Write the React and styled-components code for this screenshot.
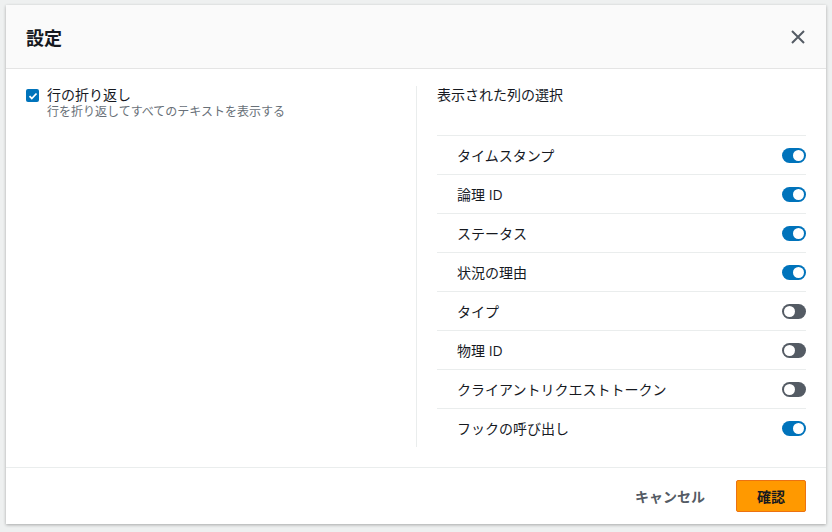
import React, { useState } from 'react';
import styled, { createGlobalStyle } from 'styled-components';

const Global = createGlobalStyle`
  body { margin: 0; background: #eef0f0; font-family: "Open Sans", "Noto Sans CJK JP", sans-serif; }
`;

const Page = styled.div`
  width: 832px;
  height: 532px;
  padding: 5px 6px 0 6px;
  box-sizing: border-box;
`;

const Modal = styled.div`
  width: 820px;
  height: 519px;
  background: #fff;
  box-shadow: 0 1px 3px rgba(0,0,0,0.3);
  display: flex;
  flex-direction: column;
`;

const Header = styled.div`
  height: 63px;
  flex: none;
  background: #fafafa;
  border-bottom: 1px solid #e4e4e4;
  display: flex;
  align-items: center;
  justify-content: space-between;
  padding: 0 20px;
`;

const Title = styled.h2`
  margin: 0;
  font-size: 18px;
  font-weight: 700;
  color: #16191f;
`;

const Close = styled.button`
  border: none;
  background: none;
  padding: 0;
  display: flex;
  cursor: pointer;
`;

const Body = styled.div`
  flex: 1;
  display: grid;
  grid-template-columns: 391px 1fr;
  padding: 17px 20px 20px 20px;
`;

const Left = styled.div`
  border-right: 1px solid #eaeded;
`;

const CheckRow = styled.label`
  display: flex;
  gap: 8px;
  align-items: flex-start;
`;

const Box = styled.span`
  width: 13px;
  height: 13px;
  margin-top: 3px;
  border-radius: 2px;
  background: #0073bb;
  display: flex;
  align-items: center;
  justify-content: center;
`;

const Label = styled.div`
  font-size: 14px;
  color: #16191f;
  line-height: 18px;
`;

const Desc = styled.div`
  font-size: 12px;
  color: #687078;
  line-height: 16px;
`;

const Right = styled.div`
  padding-left: 20px;
`;

const SectionTitle = styled.div`
  font-size: 14px;
  color: #16191f;
  height: 49px;
  line-height: 18px;
`;

const Row = styled.div`
  height: 38px;
  border-top: 1px solid #eaeded;
  display: flex;
  align-items: center;
  justify-content: space-between;
  padding-left: 20px;
  font-size: 14px;
  color: #16191f;
`;

const Toggle = styled.button`
  width: 24px;
  height: 15px;
  border-radius: 8px;
  border: none;
  padding: 0;
  background: ${p => (p.$on ? '#0073bb' : '#545b64')};
  position: relative;
  cursor: pointer;
  &::after {
    content: '';
    position: absolute;
    top: 2px;
    left: ${p => (p.$on ? '11px' : '2px')};
    width: 11px;
    height: 11px;
    border-radius: 50%;
    background: #fff;
  }
`;

const Footer = styled.div`
  height: 56px;
  flex: none;
  border-top: 1px solid #eaeded;
  display: flex;
  align-items: center;
  justify-content: flex-end;
  gap: 10px;
  padding: 0 20px;
`;

const Button = styled.button`
  height: 32px;
  padding: 0 20px;
  font-family: inherit;
  font-size: 14px;
  font-weight: 700;
  border-radius: 2px;
  border: 1px solid ${p => (p.$primary ? '#ec7211' : 'transparent')};
  background: ${p => (p.$primary ? '#ff9900' : 'transparent')};
  color: ${p => (p.$primary ? '#16191f' : '#545b64')};
  cursor: pointer;
`;

const initial = [
  ['タイムスタンプ', true],
  ['論理 ID', true],
  ['ステータス', true],
  ['状況の理由', true],
  ['タイプ', false],
  ['物理 ID', false],
  ['クライアントリクエストトークン', false],
  ['フックの呼び出し', true],
];

export default function App() {
  const [cols, setCols] = useState(initial);
  const flip = i => setCols(cols.map((c, j) => (j === i ? [c[0], !c[1]] : c)));
  return (
    <Page>
      <Global />
      <Modal>
        <Header>
          <Title>設定</Title>
          <Close>
            <svg width="16" height="16" viewBox="0 0 16 16">
              <path d="M2 2l12 12M14 2L2 14" stroke="#545b64" strokeWidth="2" />
            </svg>
          </Close>
        </Header>
        <Body>
          <Left>
            <CheckRow>
              <Box>
                <svg width="10" height="10" viewBox="0 0 10 10">
                  <path d="M1.5 5.2l2.3 2.3L8.5 2.5" stroke="#fff" strokeWidth="1.8" fill="none" />
                </svg>
              </Box>
              <div>
                <Label>行の折り返し</Label>
                <Desc>行を折り返してすべてのテキストを表示する</Desc>
              </div>
            </CheckRow>
          </Left>
          <Right>
            <SectionTitle>表示された列の選択</SectionTitle>
            {cols.map(([name, on], i) => (
              <Row key={name}>
                {name}
                <Toggle $on={on} onClick={() => flip(i)} />
              </Row>
            ))}
          </Right>
        </Body>
        <Footer>
          <Button>キャンセル</Button>
          <Button $primary>確認</Button>
        </Footer>
      </Modal>
    </Page>
  );
}
